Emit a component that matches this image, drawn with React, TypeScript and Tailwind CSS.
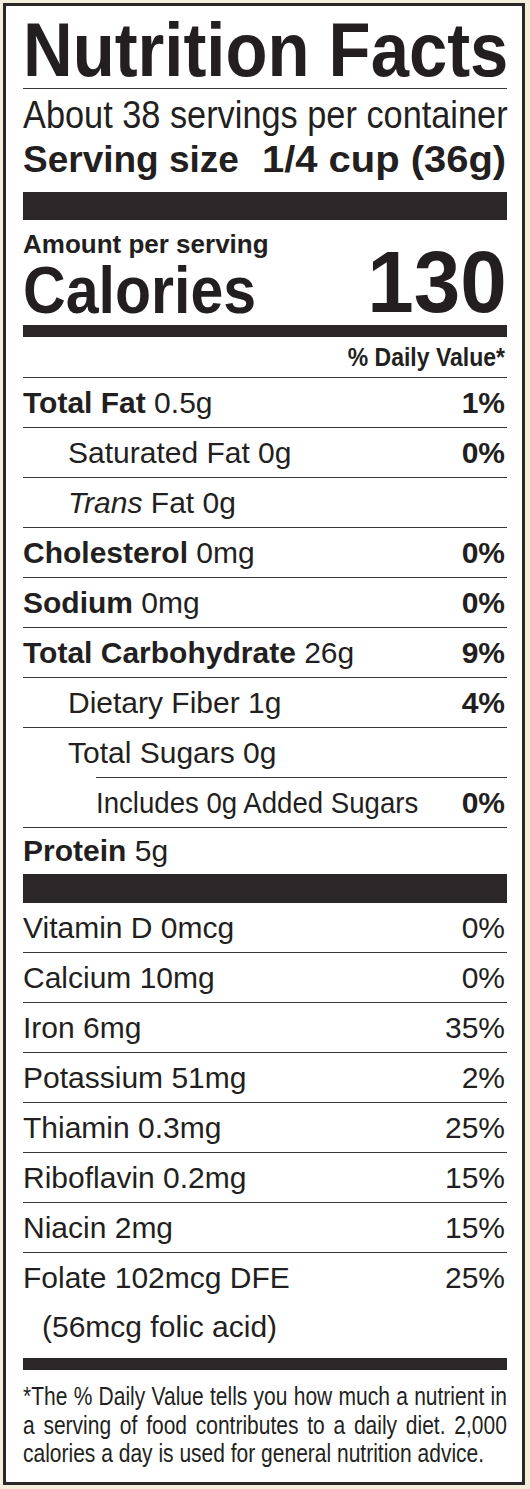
import type { ReactNode } from "react";

type Line = {
  label: ReactNode;
  pct?: string;
  indent?: "none" | "one" | "two";
};

const fats: Line[] = [
  { label: <><span className="font-bold">Total Fat</span> 0.5g</>, pct: "1%" },
  { label: "Saturated Fat 0g", pct: "0%", indent: "one" },
  { label: <><span className="italic">Trans</span> Fat 0g</>, indent: "one" },
  { label: <><span className="font-bold">Cholesterol</span> 0mg</>, pct: "0%" },
  { label: <><span className="font-bold">Sodium</span> 0mg</>, pct: "0%" },
  { label: <><span className="font-bold">Total Carbohydrate</span> 26g</>, pct: "9%" },
  { label: "Dietary Fiber 1g", pct: "4%", indent: "one" },
  { label: "Total Sugars 0g", indent: "one" },
];

const vitamins: Line[] = [
  { label: "Vitamin D 0mcg", pct: "0%" },
  { label: "Calcium 10mg", pct: "0%" },
  { label: "Iron 6mg", pct: "35%" },
  { label: "Potassium 51mg", pct: "2%" },
  { label: "Thiamin 0.3mg", pct: "25%" },
  { label: "Riboflavin 0.2mg", pct: "15%" },
  { label: "Niacin 2mg", pct: "15%" },
];

const indentClass = {
  none: "",
  one: "pl-[45px]",
  two: "pl-[73px]",
};

function NutrientRow({ line }: { line: Line }) {
  return (
    <div
      className={`flex h-[50px] justify-between border-t border-[#3a3536] pr-[2px] text-[30px] leading-[49px] ${indentClass[line.indent ?? "none"]}`}
    >
      <span className="whitespace-nowrap">{line.label}</span>
      {line.pct && <span className="font-bold">{line.pct}</span>}
    </div>
  );
}

function VitaminRow({ line }: { line: Line }) {
  return (
    <div className="flex h-[50px] justify-between border-b border-[#3a3536] pr-[2px] text-[30px] leading-[49px]">
      <span className="whitespace-nowrap">{line.label}</span>
      <span>{line.pct}</span>
    </div>
  );
}

export default function App() {
  return (
    <div className="h-[1489px] w-[530px] overflow-hidden bg-[#f3efdb] pl-[3px] pt-[3px]">
      <div className="h-[1482px] w-[522px] overflow-hidden border-[3px] border-[#2b2728] bg-white pl-[17px] pt-[6px] font-['Liberation_Sans',Arial,sans-serif] text-[#231f20]">
        <div className="w-[484px]">
          {/* header */}
          <div className="border-b border-[#3a3536]">
            <div className="h-[76px] origin-left scale-x-[0.905] whitespace-nowrap text-[76px] font-bold leading-[76px]">
              Nutrition Facts
            </div>
          </div>
          <div className="h-[51px] origin-left scale-x-[0.88] whitespace-nowrap text-[39px] leading-[51px]">
            About 38 servings per container
          </div>
          <div className="flex h-[40px] justify-between whitespace-nowrap pr-[1px] text-[37px] font-bold leading-[40px]">
            <span>Serving size</span>
            <span className="origin-right scale-x-[1.08]">1/4 cup (36g)</span>
          </div>

          <div className="mt-[12px] h-[28px] bg-[#2b2728]" />

          {/* calories */}
          <div className="flex items-end justify-between pt-[7px]">
            <div>
              <div className="h-[35px] whitespace-nowrap text-[26px] font-bold leading-[35px]">
                Amount per serving
              </div>
              <div className="h-[56px] origin-left scale-x-[0.895] whitespace-nowrap text-[66px] font-bold leading-[56px]">
                Calories
              </div>
            </div>
            <div className="h-[72px] origin-right scale-x-[0.95] text-[88px] font-bold leading-[72px]">
              130
            </div>
          </div>

          <div className="mt-[7px] h-[12px] bg-[#2b2728]" />

          <div className="flex h-[40px] justify-end pr-[2px] pt-[1px] text-[25px] font-bold leading-[39px]">
            <span className="origin-right scale-x-[0.92] whitespace-nowrap">% Daily Value*</span>
          </div>

          {fats.map((line, i) => (
            <NutrientRow key={i} line={line} />
          ))}
          <div className="ml-[73px] flex h-[50px] justify-between border-t border-[#3a3536] pr-[2px] text-[30px] leading-[49px]">
            <span className="origin-left scale-x-[0.92] whitespace-nowrap">Includes 0g Added Sugars</span>
            <span className="font-bold">0%</span>
          </div>
          <div className="h-[47px] border-t border-[#3a3536] text-[30px] leading-[46px]">
            <span className="font-bold">Protein</span> 5g
          </div>

          <div className="h-[29px] bg-[#2b2728]" />

          {/* vitamins and minerals */}
          {vitamins.map((line, i) => (
            <VitaminRow key={i} line={line} />
          ))}
          <div className="flex h-[49px] justify-between pr-[2px] text-[30px] leading-[49px]">
            <span>Folate 102mcg DFE</span>
            <span>25%</span>
          </div>
          <div className="h-[49px] pl-[19px] text-[30px] leading-[49px]">(56mcg folic acid)</div>

          <div className="mt-[7px] h-[12px] bg-[#2b2728]" />

          {/* footnote */}
          <div className="mt-[12px] w-[576px] origin-left scale-x-[0.84] text-[25px] leading-[28.5px]">
            <div className="whitespace-nowrap [text-align-last:justify]">
              *The % Daily Value tells you how much a nutrient in
            </div>
            <div className="whitespace-nowrap [text-align-last:justify]">
              a serving of food contributes to a daily diet. 2,000
            </div>
            <div className="whitespace-nowrap">calories a day is used for general nutrition advice.</div>
          </div>
        </div>
      </div>
    </div>
  );
}
